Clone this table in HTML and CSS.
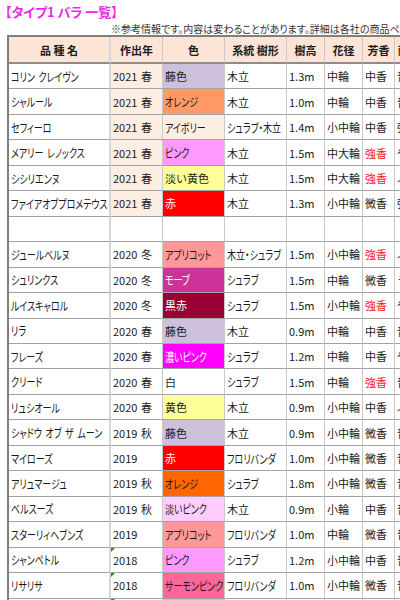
FILE: index.html
```html
<!DOCTYPE html>
<html lang="ja">
<head>
  <meta charset="UTF-8">
  <title>タイプ1 バラ 一覧</title>
  <link rel="stylesheet" href="styles.css">
</head>
<body>
  <div class="page-title">【タイプ1 バラ 一覧】</div>
  <div class="note-row">
    <div class="note">※参考情報です。内容は変わることがあります。詳細は各社の商品ページをご確認ください。</div>
  </div>

  <div class="sheet">
    <div class="cell head name">品 種 名</div>
    <div class="cell head">作出年</div>
    <div class="cell head">色</div>
    <div class="cell head">系統 樹形</div>
    <div class="cell head">樹高</div>
    <div class="cell head">花径</div>
    <div class="cell head">芳香</div>
    <div class="cell head">耐病性</div>

    <div class="cell name"><span class="k">コリン クレイヴン</span></div>
    <div class="cell new">2021 春</div>
    <div class="cell c-lilac">藤色</div>
    <div class="cell">木立</div>
    <div class="cell">1.3m</div>
    <div class="cell">中輪</div>
    <div class="cell">中香</div>
    <div class="cell">普通</div>

    <div class="cell name"><span class="k">シャルール</span></div>
    <div class="cell new">2021 春</div>
    <div class="cell c-orange"><span class="k">オレンジ</span></div>
    <div class="cell">木立</div>
    <div class="cell">1.0m</div>
    <div class="cell">中輪</div>
    <div class="cell">中香</div>
    <div class="cell">普通</div>

    <div class="cell name"><span class="k">セフィーロ</span></div>
    <div class="cell new">2021 春</div>
    <div class="cell c-ivory"><span class="k">アイボリー</span></div>
    <div class="cell"><span class="k">シュラブ・木立</span></div>
    <div class="cell">1.4m</div>
    <div class="cell">小中輪</div>
    <div class="cell">中香</div>
    <div class="cell">強い</div>

    <div class="cell name"><span class="k">メアリー レノックス</span></div>
    <div class="cell new">2021 春</div>
    <div class="cell c-pink"><span class="k">ピンク</span></div>
    <div class="cell">木立</div>
    <div class="cell">1.5m</div>
    <div class="cell">中大輪</div>
    <div class="cell strong">強香</div>
    <div class="cell">やや弱</div>

    <div class="cell name"><span class="k">シシリエンヌ</span></div>
    <div class="cell new">2021 春</div>
    <div class="cell c-cream">淡い黄色</div>
    <div class="cell">木立</div>
    <div class="cell">1.5m</div>
    <div class="cell">中大輪</div>
    <div class="cell strong">強香</div>
    <div class="cell">ふつう</div>

    <div class="cell name"><span class="k">ファイアオブプロメテウス</span></div>
    <div class="cell new">2021 春</div>
    <div class="cell c-red">赤</div>
    <div class="cell">木立</div>
    <div class="cell">1.3m</div>
    <div class="cell">小中輪</div>
    <div class="cell">微香</div>
    <div class="cell">強い</div>

    <div class="cell name"></div>
    <div class="cell"></div>
    <div class="cell"></div>
    <div class="cell"></div>
    <div class="cell"></div>
    <div class="cell"></div>
    <div class="cell"></div>
    <div class="cell"></div>

    <div class="cell name"><span class="k">ジュールベルヌ</span></div>
    <div class="cell">2020 冬</div>
    <div class="cell c-apricot"><span class="k">アプリコット</span></div>
    <div class="cell"><span class="k">木立・シュラブ</span></div>
    <div class="cell">1.5m</div>
    <div class="cell">小中輪</div>
    <div class="cell strong">強香</div>
    <div class="cell">ふつう</div>

    <div class="cell name"><span class="k">シュリンクス</span></div>
    <div class="cell">2020 冬</div>
    <div class="cell c-mauve"><span class="k">モーブ</span></div>
    <div class="cell"><span class="k">シュラブ</span></div>
    <div class="cell">1.5m</div>
    <div class="cell">中輪</div>
    <div class="cell">微香</div>
    <div class="cell">ラ</div>

    <div class="cell name"><span class="k">ルイスキャロル</span></div>
    <div class="cell">2020 冬</div>
    <div class="cell c-darkred">黒赤</div>
    <div class="cell"><span class="k">シュラブ</span></div>
    <div class="cell">1.5m</div>
    <div class="cell">小中輪</div>
    <div class="cell strong">強香</div>
    <div class="cell">や</div>

    <div class="cell name"><span class="k">リラ</span></div>
    <div class="cell">2020 春</div>
    <div class="cell c-lilac">藤色</div>
    <div class="cell">木立</div>
    <div class="cell">0.9m</div>
    <div class="cell">中輪</div>
    <div class="cell">中香</div>
    <div class="cell">普通</div>

    <div class="cell name"><span class="k">フレーズ</span></div>
    <div class="cell">2020 春</div>
    <div class="cell c-magenta"><span class="k">濃いピンク</span></div>
    <div class="cell"><span class="k">シュラブ</span></div>
    <div class="cell">1.2m</div>
    <div class="cell">中輪</div>
    <div class="cell">中香</div>
    <div class="cell">や</div>

    <div class="cell name"><span class="k">クリード</span></div>
    <div class="cell">2020 春</div>
    <div class="cell">白</div>
    <div class="cell"><span class="k">シュラブ</span></div>
    <div class="cell">1.5m</div>
    <div class="cell">中輪</div>
    <div class="cell strong">強香</div>
    <div class="cell">普通</div>

    <div class="cell name"><span class="k">リュシオール</span></div>
    <div class="cell">2020 春</div>
    <div class="cell c-cream">黄色</div>
    <div class="cell">木立</div>
    <div class="cell">0.9m</div>
    <div class="cell">小中輪</div>
    <div class="cell">中香</div>
    <div class="cell">ふつう</div>

    <div class="cell name"><span class="k">シャドウ オブ ザ ムーン</span></div>
    <div class="cell">2019 秋</div>
    <div class="cell c-lilac">藤色</div>
    <div class="cell">木立</div>
    <div class="cell">0.9m</div>
    <div class="cell">小中輪</div>
    <div class="cell">微香</div>
    <div class="cell">普通</div>

    <div class="cell name"><span class="k">マイローズ</span></div>
    <div class="cell">2019</div>
    <div class="cell c-red">赤</div>
    <div class="cell"><span class="k">フロリバンダ</span></div>
    <div class="cell">1.0m</div>
    <div class="cell">小中輪</div>
    <div class="cell">微香</div>
    <div class="cell">普通</div>

    <div class="cell name"><span class="k">アリュマージュ</span></div>
    <div class="cell">2019 秋</div>
    <div class="cell c-deeporange"><span class="k">オレンジ</span></div>
    <div class="cell"><span class="k">シュラブ</span></div>
    <div class="cell">1.8m</div>
    <div class="cell">小中輪</div>
    <div class="cell">微香</div>
    <div class="cell">普通</div>

    <div class="cell name"><span class="k">ベルスーズ</span></div>
    <div class="cell">2019 秋</div>
    <div class="cell c-palepink"><span class="k">淡いピンク</span></div>
    <div class="cell">木立</div>
    <div class="cell">0.9m</div>
    <div class="cell">小輪</div>
    <div class="cell">中香</div>
    <div class="cell">普通</div>

    <div class="cell name"><span class="k">スターリィヘブンズ</span></div>
    <div class="cell">2019</div>
    <div class="cell c-apricot"><span class="k">アプリコット</span></div>
    <div class="cell"><span class="k">フロリバンダ</span></div>
    <div class="cell">1.0m</div>
    <div class="cell">中輪</div>
    <div class="cell">微香</div>
    <div class="cell">普通</div>

    <div class="cell name"><span class="k">シャンペトル</span></div>
    <div class="cell flagged">2018</div>
    <div class="cell c-pink"><span class="k">ピンク</span></div>
    <div class="cell"><span class="k">シュラブ</span></div>
    <div class="cell">1.2m</div>
    <div class="cell">小中輪</div>
    <div class="cell">中香</div>
    <div class="cell">普通</div>

    <div class="cell name"><span class="k">リサリサ</span></div>
    <div class="cell flagged">2018</div>
    <div class="cell c-salmon"><span class="k">サーモンピンク</span></div>
    <div class="cell"><span class="k">フロリバンダ</span></div>
    <div class="cell">1.0m</div>
    <div class="cell">小中輪</div>
    <div class="cell">微香</div>
    <div class="cell">普通</div>

    <div class="cell name"><span class="k">ラ ドルチェ ヴィータ</span></div>
    <div class="cell flagged">2018</div>
    <div class="cell c-pink"><span class="k">ピンク</span></div>
    <div class="cell">木立</div>
    <div class="cell">1.2m</div>
    <div class="cell">中輪</div>
    <div class="cell">中香</div>
    <div class="cell">普通</div>
  </div>
</body>
</html>
```

FILE: styles.css
```css
html, body {
  margin: 0;
  padding: 0;
  background: #ffffff;
  overflow: hidden;
  font-family: "Noto Sans CJK JP", "Noto Sans", sans-serif;
  color: #1a1a1a;
}

.page-title {
  padding: 3px 0 0 5px;
  height: 17px;
  font-size: 13px;
  font-weight: bold;
  color: #e82ae8;
  line-height: 17px;
  font-feature-settings: "palt";
}

.note-row {
  padding-left: 111px;
  height: 15px;
  overflow: hidden;
}

.note {
  font-size: 10px;
  line-height: 18px;
  white-space: nowrap;
  font-feature-settings: "palt";
  color: #333333;
}

.sheet {
  display: grid;
  grid-template-columns: 102px 52px 62px 62px 38px 38px 32px 40px;
  grid-template-rows: 27px;
  grid-auto-rows: 25.46px;
  margin-left: 7px;
  border-left: 2px solid #7f7f7f;
  border-top: 2px solid #7f7f7f;
  width: max-content;
}

.cell {
  position: relative;
  box-sizing: border-box;
  display: flex;
  align-items: center;
  padding: 0 2px;
  border-right: 1px solid #c9c9c9;
  border-bottom: 1px solid #a3a3a3;
  font-size: 11px;
  word-spacing: 1px;
  white-space: nowrap;
  overflow: hidden;
}

/* the sheet's katakana are narrow, so squeeze those runs */
.k {
  display: inline-block;
  font-size: 12px;
  font-feature-settings: "palt";
  word-spacing: 2px;
  transform: scaleX(0.75);
  transform-origin: left center;
}

.cell.name {
  border-right: 2px solid #d6d6d6;
}

.cell.head {
  justify-content: center;
  font-weight: bold;
  word-spacing: 0;
  background: #fce4d6;
  border-bottom: 2px solid #8c8c8c;
}

.cell.new {
  background: #fdeee4;
}

.cell.strong {
  color: #ff2020;
}

/* small green comment marker */
.cell.flagged::before {
  content: "";
  position: absolute;
  left: 0;
  top: 0;
  border-top: 4px solid #1f8a1f;
  border-right: 4px solid transparent;
}

.c-lilac { background: #ccc0da; }
.c-orange { background: #ff9966; }
.c-ivory { background: #fdeee4; }
.c-pink { background: #ff99ff; }
.c-cream { background: #ffff99; }
.c-red { background: #ff0000; color: #ffffff; }
.c-apricot { background: #ff9999; }
.c-mauve { background: #cc3399; color: #ffffff; }
.c-darkred { background: #990033; color: #ffffff; }
.c-magenta { background: #ff00ff; color: #ffffff; }
.c-deeporange { background: #ff6600; }
.c-palepink { background: #ffccff; }
.c-salmon { background: #ff6699; }
```
